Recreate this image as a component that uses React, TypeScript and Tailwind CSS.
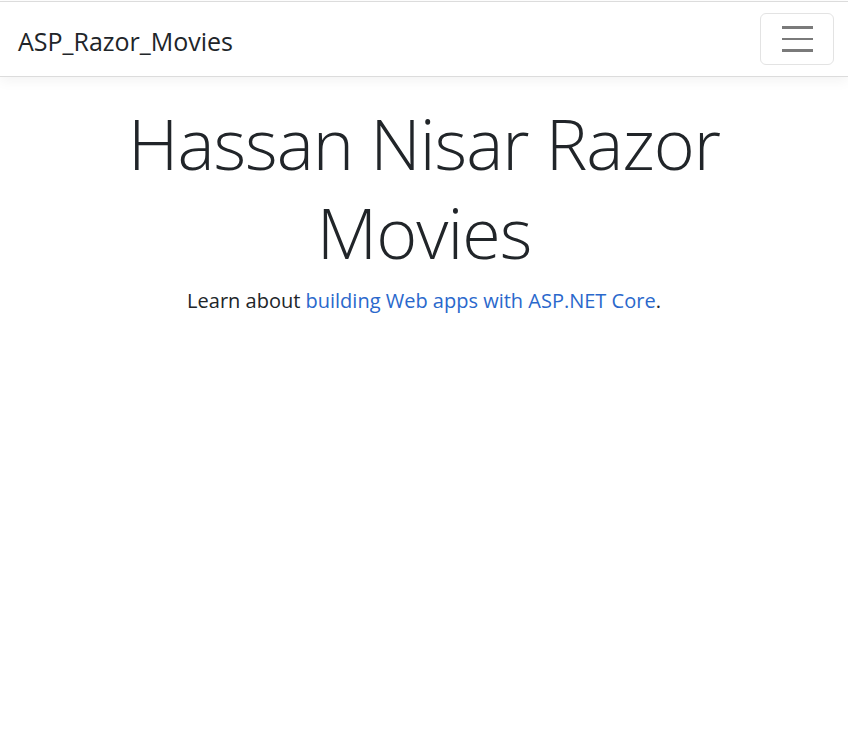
import React from "react";

export default function App() {
  return (
    <div
      className="min-h-[754px] bg-white pt-px text-[#212529]"
      style={{ fontFamily: '"Open Sans", "Noto Sans", "Liberation Sans", sans-serif' }}
    >
      <header className="border-t border-b border-[#dcdcdc] bg-white shadow-[0_4px_12px_rgba(0,0,0,0.05)]">
        <nav className="flex h-[74px] items-center justify-between pl-[18px] pr-[14px]">
          <a className="pt-[4px] text-[25px] leading-none text-[#212529]">ASP_Razor_Movies</a>
          <button className="flex h-[52px] w-[74px] flex-col items-center justify-center gap-[9px] rounded-[6px] border border-[#e3e3e3] bg-white">
            <span className="block h-[2.5px] w-[31px] bg-[#7a7a7a]" />
            <span className="block h-[2.5px] w-[31px] bg-[#7a7a7a]" />
            <span className="block h-[2.5px] w-[31px] bg-[#7a7a7a]" />
          </button>
        </nav>
      </header>
      <main className="flex flex-col items-center pt-[22px] text-center">
        <h1 className="mx-auto max-w-[640px] text-[70px] font-light leading-[89px] tracking-[-1px] text-[#212529]">
          Hassan Nisar Razor Movies
        </h1>
        <p className="mt-[9px] text-[20px] leading-[30px]">
          Learn about{" "}
          <a className="text-[#2a68cc]">building Web apps with ASP.NET Core</a>.
        </p>
      </main>
    </div>
  );
}
